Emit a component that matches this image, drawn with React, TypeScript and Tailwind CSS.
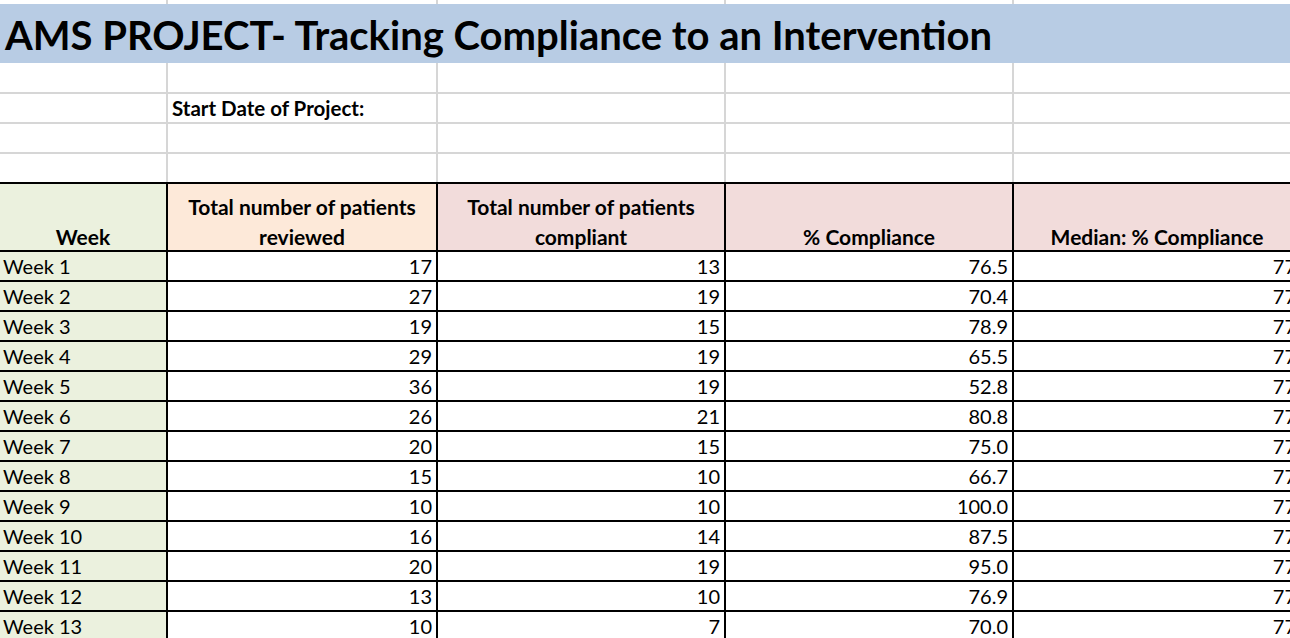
import React from "react";

const rows: [string, string, string, string, string][] = [
  ["Week 1", "17", "13", "76.5", "77"],
  ["Week 2", "27", "19", "70.4", "77"],
  ["Week 3", "19", "15", "78.9", "77"],
  ["Week 4", "29", "19", "65.5", "77"],
  ["Week 5", "36", "19", "52.8", "77"],
  ["Week 6", "26", "21", "80.8", "77"],
  ["Week 7", "20", "15", "75.0", "77"],
  ["Week 8", "15", "10", "66.7", "77"],
  ["Week 9", "10", "10", "100.0", "77"],
  ["Week 10", "16", "14", "87.5", "77"],
  ["Week 11", "20", "19", "95.0", "77"],
  ["Week 12", "13", "10", "76.9", "77"],
  ["Week 13", "10", "7", "70.0", "77"],
];

// grey gridline row (blank sheet area above the table)
const BlankRow: React.FC<{ h: string; last?: boolean; children?: React.ReactNode }> = ({ h, last, children }) => (
  <div className={`flex ${h} ${last ? "border-b-2 border-black" : "border-b-2 border-[#d6d6d6]"}`}>
    <div className="w-[168px] shrink-0 border-r-2 border-[#d6d6d6]" />
    <div className="w-[270px] shrink-0 border-r-2 border-[#d6d6d6] flex items-center pl-[4px] font-bold text-[20.5px] whitespace-nowrap">
      {children}
    </div>
    <div className="w-[288px] shrink-0 border-r-2 border-[#d6d6d6]" />
    <div className="w-[288px] shrink-0 border-r-2 border-[#d6d6d6]" />
    <div className="w-[288px] shrink-0 border-r-2 border-[#d6d6d6]" />
  </div>
);

const App: React.FC = () => {
  return (
    <div className="w-[1290px] h-[638px] overflow-hidden bg-white text-black font-['Lato','Open_Sans',sans-serif] text-[20px]">
      <div className="w-[1302px]">
        {/* top sliver of the row above */}
        <div className="flex h-[4px]">
          <div className="w-[168px] shrink-0 border-r-2 border-[#d6d6d6]" />
          <div className="w-[270px] shrink-0 border-r-2 border-[#d6d6d6]" />
          <div className="w-[288px] shrink-0 border-r-2 border-[#d6d6d6]" />
          <div className="w-[288px] shrink-0 border-r-2 border-[#d6d6d6]" />
          <div className="w-[288px] shrink-0 border-r-2 border-[#d6d6d6]" />
        </div>

        {/* title band */}
        <div className="h-[59px] bg-[#b8cce4] flex items-center pl-[5px] pt-[3px]">
          <h1 className="text-[40px] font-bold whitespace-nowrap leading-none">
            AMS PROJECT- Tracking Compliance to an Intervention
          </h1>
        </div>

        <BlankRow h="h-[31px]" />
        <BlankRow h="h-[30px]">Start Date of Project:</BlankRow>
        <BlankRow h="h-[30px]" />
        <BlankRow h="h-[30px]" last />

        {/* header */}
        <div className="flex h-[68px] border-b-2 border-black font-bold text-[21px] leading-[30px] text-center whitespace-nowrap">
          <div className="w-[168px] shrink-0 border-r-2 border-black bg-[#ebf1de] flex items-end justify-center">
            <span className="translate-y-[2px]">Week</span>
          </div>
          <div className="w-[270px] shrink-0 border-r-2 border-black bg-[#fde9d9] flex items-end justify-center">
            <span className="translate-y-[2px]">
              Total number of patients
              <br />
              reviewed
            </span>
          </div>
          <div className="w-[288px] shrink-0 border-r-2 border-black bg-[#f2dcdb] flex items-end justify-center">
            <span className="translate-y-[2px]">
              Total number of patients
              <br />
              compliant
            </span>
          </div>
          <div className="w-[288px] shrink-0 border-r-2 border-black bg-[#f2dcdb] flex items-end justify-center">
            <span className="translate-y-[2px]">% Compliance</span>
          </div>
          <div className="w-[288px] shrink-0 border-r-2 border-black bg-[#f2dcdb] flex items-end justify-center">
            <span className="translate-y-[2px]">Median: % Compliance</span>
          </div>
        </div>

        {/* data */}
        {rows.map((r) => (
          <div key={r[0]} className="flex h-[30px] border-b-2 border-black">
            <div className="w-[168px] shrink-0 border-r-2 border-black bg-[#ebf1de] flex items-center pl-[3px]">
              {r[0]}
            </div>
            <div className="w-[270px] shrink-0 border-r-2 border-black flex items-center justify-end pr-[4px]">
              {r[1]}
            </div>
            <div className="w-[288px] shrink-0 border-r-2 border-black flex items-center justify-end pr-[4px]">
              {r[2]}
            </div>
            <div className="w-[288px] shrink-0 border-r-2 border-black flex items-center justify-end pr-[4px]">
              {r[3]}
            </div>
            <div className="w-[288px] shrink-0 border-r-2 border-black flex items-center justify-end pr-[4px]">
              {r[4]}
            </div>
          </div>
        ))}
      </div>
    </div>
  );
};

export default App;
